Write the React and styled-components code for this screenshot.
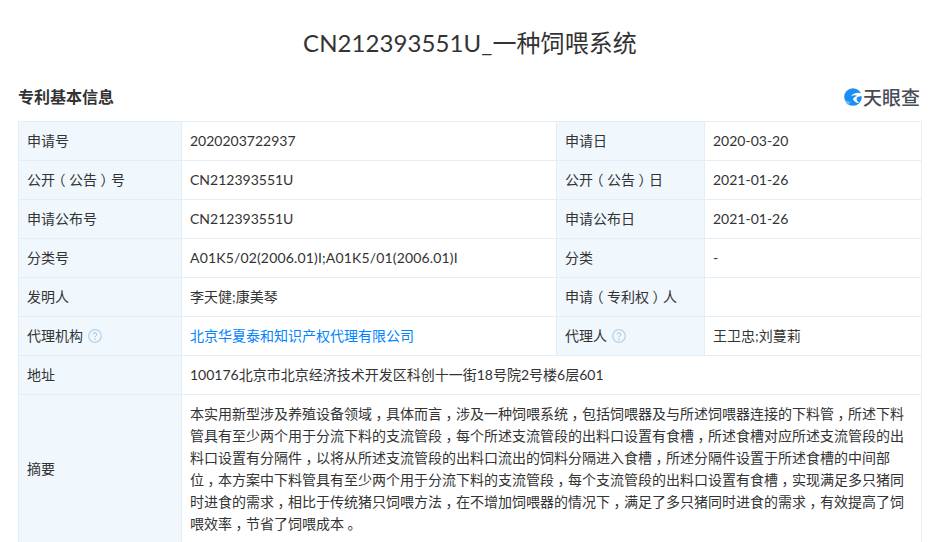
import React from "react";
import styled, { createGlobalStyle } from "styled-components";

const GlobalStyle = createGlobalStyle`
  html, body {
    margin: 0;
    padding: 0;
    background: #fff;
    overflow: hidden;
  }
  body {
    font-family: Lato, "Noto Sans CJK SC", sans-serif;
  }
`;

const Page = styled.div`
  width: 932px;
  height: 542px;
  overflow: hidden;
  box-sizing: border-box;
  padding: 0 10px 0 18px;
  color: #333;
`;

const Title = styled.h1`
  margin: 0;
  padding-top: 26px;
  height: 59px;
  font-size: 24px;
  line-height: 34px;
  font-weight: 400;
  letter-spacing: 0.08px;
  text-align: center;
  color: #333;
`;

const SectionHead = styled.div`
  display: flex;
  align-items: center;
  justify-content: space-between;
  height: 24px;
  margin-bottom: 12px;
`;

const SectionTitle = styled.h2`
  margin: 0;
  font-size: 16px;
  line-height: 24px;
  font-weight: 700;
  color: #333;
`;

const Logo = styled.div`
  display: flex;
  align-items: center;
  gap: 1px;
  margin-right: 2px;
`;

const LogoText = styled.span`
  font-family: "Noto Sans CJK SC", sans-serif;
  font-size: 19px;
  line-height: 20px;
  font-weight: 500;
  color: #474c54;
`;

const Table = styled.table`
  width: 903px;
  table-layout: fixed;
  border-collapse: collapse;
  font-size: 14px;
  line-height: 22px;
`;

const Label = styled.td`
  box-sizing: border-box;
  height: 39px;
  padding: 8px;
  border: 1px solid #e3eef7;
  background: #f0f7fd;
  color: #333;
  vertical-align: middle;
`;

const Value = styled.td`
  box-sizing: border-box;
  height: 39px;
  padding: 8px;
  border: 1px solid #e3eef7;
  color: #333;
  vertical-align: middle;
  letter-spacing: ${(p) => (p.$spread ? "0.16px" : "normal")};
`;

const AbstractLine = styled.div`
  white-space: nowrap;
`;

const AgencyLink = styled.a`
  color: #0084ff;
  text-decoration: none;
`;

// half-width glyph with padding, so the mark sits in the middle of its em box
const Punct = styled.span`
  font-feature-settings: "halt";
  padding: 0 3.5px;
`;

const HintIcon = styled.svg`
  width: 14px;
  height: 14px;
  margin-left: 5px;
  vertical-align: -2px;
`;

const Hint = () => (
  <HintIcon viewBox="0 0 14 14" fill="none">
    <circle cx="7" cy="7" r="6.3" stroke="#b7d3ec" strokeWidth="1.3" />
    <path
      d="M5.2 5.5c0-1 .8-1.7 1.8-1.7s1.8.7 1.8 1.6c0 1.4-1.8 1.5-1.8 3"
      stroke="#9fb8cd"
      strokeWidth="1"
    />
    <circle cx="7" cy="10.2" r=".7" fill="#9fb8cd" />
  </HintIcon>
);

const LogoMark = () => (
  <svg width="18" height="18" viewBox="0 0 18 18">
    <circle cx="9" cy="9" r="8.8" fill="#1a8ef2" />
    <path
      d="M18 5.6C14 3.8 9.4 4.8 6.8 8.4c2.6-1.5 5-1.4 6.4-.5-2.2.3-3.9 1.6-4.3 3.6 1.6 2.2 4 3.6 6.8 3.8-2.6-1.9-3.6-3.8-2.9-5.6 1.7-1.3 3.5-1.6 5.2-1.1z"
      fill="#fff"
    />
    <path d="M1.2 11.2c1.4 1.7 3.6 2.8 6.2 2.8-1.6 1-2.8 2-3.5 2.8-1.4-1.3-2.3-3.2-2.7-5.6z" fill="#6bb8f7" />
  </svg>
);

const withPunct = (text) =>
  text.split(/([（），。])/).map((part, i) =>
    /^[（），。]$/.test(part) ? <Punct key={i}>{part}</Punct> : part,
  );

const rows = [
  ["申请号", "2020203722937", "申请日", "2020-03-20"],
  ["公开（公告）号", "CN212393551U", "公开（公告）日", "2021-01-26"],
  ["申请公布号", "CN212393551U", "申请公布日", "2021-01-26"],
  ["分类号", "A01K5/02(2006.01)I;A01K5/01(2006.01)I", "分类", "-"],
  ["发明人", "李天健;康美琴", "申请（专利权）人", ""],
];

const abstractLines = [
  "本实用新型涉及养殖设备领域，具体而言，涉及一种饲喂系统，包括饲喂器及与所述饲喂器连接的下料管，所述下料",
  "管具有至少两个用于分流下料的支流管段，每个所述支流管段的出料口设置有食槽，所述食槽对应所述支流管段的出",
  "料口设置有分隔件，以将从所述支流管段的出料口流出的饲料分隔进入食槽，所述分隔件设置于所述食槽的中间部",
  "位，本方案中下料管具有至少两个用于分流下料的支流管段，每个支流管段的出料口设置有食槽，实现满足多只猪同",
  "时进食的需求，相比于传统猪只饲喂方法，在不增加饲喂器的情况下，满足了多只猪同时进食的需求，有效提高了饲",
  "喂效率，节省了饲喂成本。",
];

export default function App() {
  return (
    <Page>
      <GlobalStyle />
      <Title>CN212393551U_一种饲喂系统</Title>
      <SectionHead>
        <SectionTitle>专利基本信息</SectionTitle>
        <Logo>
          <LogoMark />
          <LogoText>天眼查</LogoText>
        </Logo>
      </SectionHead>
      <Table>
        <colgroup>
          <col style={{ width: 163 }} />
          <col style={{ width: 375 }} />
          <col style={{ width: 148 }} />
          <col style={{ width: 217 }} />
        </colgroup>
        <tbody>
          {rows.map((r) => (
            <tr key={r[0]}>
              <Label>{withPunct(r[0])}</Label>
              <Value $spread={r[0] === "分类号"}>{r[1]}</Value>
              <Label>{withPunct(r[2])}</Label>
              <Value>{r[3]}</Value>
            </tr>
          ))}
          <tr>
            <Label>
              代理机构
              <Hint />
            </Label>
            <Value>
              <AgencyLink href="#">北京华夏泰和知识产权代理有限公司</AgencyLink>
            </Value>
            <Label>
              代理人
              <Hint />
            </Label>
            <Value>王卫忠;刘蔓莉</Value>
          </tr>
          <tr>
            <Label>地址</Label>
            <Value colSpan={3}>100176北京市北京经济技术开发区科创十一街18号院2号楼6层601</Value>
          </tr>
          <tr>
            <Label>摘要</Label>
            <Value colSpan={3}>
              {abstractLines.map((line) => (
                <AbstractLine key={line}>{withPunct(line)}</AbstractLine>
              ))}
            </Value>
          </tr>
        </tbody>
      </Table>
    </Page>
  );
}
